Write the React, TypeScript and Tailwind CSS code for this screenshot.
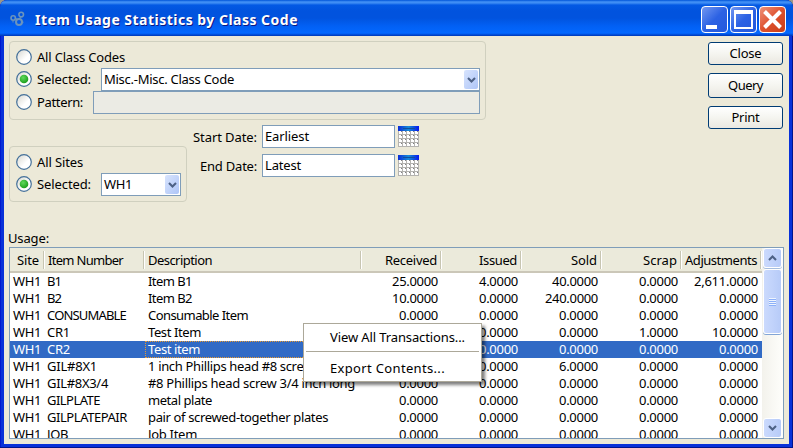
import { useLayoutEffect, useRef, useState } from "react";

/** Single-line text tracked out (or in) so that it spans exactly `w` pixels. */
function T({ w, children, className = "" }: { w: number; children: string; className?: string }) {
  const ref = useRef<HTMLSpanElement>(null);
  const [spacing, setSpacing] = useState(0);
  useLayoutEffect(() => {
    const el = ref.current;
    if (!el) return;
    el.style.letterSpacing = "0px";
    const s = (w - el.getBoundingClientRect().width) / children.length;
    el.style.letterSpacing = `${s}px`;
    setSpacing(s);
  }, [w, children]);
  return (
    <span ref={ref} className={`inline-block shrink-0 whitespace-pre ${className}`} style={{ letterSpacing: spacing }}>
      {children}
    </span>
  );
}

function Radio({ on = false, className = "" }: { on?: boolean; className?: string }) {
  return (
    <svg className={`h-4 w-4 shrink-0 ${className}`} viewBox="0 0 16 16">
      <defs>
        <linearGradient id="radioFace" x1="0" y1="0" x2="1" y2="1">
          <stop offset="0.1" stopColor="#dcdcd6" />
          <stop offset="0.6" stopColor="#ffffff" />
        </linearGradient>
        <radialGradient id="radioDot" cx="0.4" cy="0.35" r="0.7">
          <stop offset="0" stopColor="#5fd95c" />
          <stop offset="1" stopColor="#189a18" />
        </radialGradient>
      </defs>
      <circle cx="8" cy="8" r="7.3" fill="url(#radioFace)" stroke="#44709a" strokeWidth="1.2" />
      {on && <circle cx="8" cy="8" r="4.3" fill="url(#radioDot)" />}
    </svg>
  );
}

function Chevron({ up = false }: { up?: boolean }) {
  return (
    <svg className="h-[6px] w-[9px]" viewBox="0 0 9 6">
      <path d={up ? "M1 5 L4.5 1.5 L8 5" : "M1 1 L4.5 4.5 L8 1"} fill="none" stroke="#4d6185" strokeWidth="2.1" />
    </svg>
  );
}

function Combo({ text, w, className }: { text: string; w: number; className: string }) {
  return (
    <div className={`flex h-[23px] items-center justify-between border border-[#7f9db9] bg-white pr-px pl-[2px] ${className}`}>
      <T w={w}>{text}</T>
      <div className="flex h-[19px] w-[14px] items-center justify-center rounded-[2px] bg-linear-to-br from-[#d8e4fd] to-[#aec5f7]">
        <Chevron />
      </div>
    </div>
  );
}

function Calendar() {
  return (
    <svg className="ml-[3px] h-[21px] w-[21px] shrink-0" viewBox="0 0 21 21" shapeRendering="crispEdges">
      <defs>
        <linearGradient id="calHead">
          <stop offset="0" stopColor="#0a2cd8" />
          <stop offset="0.5" stopColor="#148ad8" />
          <stop offset="1" stopColor="#0717ee" />
        </linearGradient>
      </defs>
      <rect width="21" height="21" fill="#b4b3b0" />
      <rect width="21" height="5" fill="url(#calHead)" />
      <rect x="5" y="2" width="12" height="1" fill="#104e9c" />
      {[5, 9, 13, 17].map((y) =>
        [0, 4, 8, 12, 16].map((x) => (
          <g key={`${x}-${y}`}>
            <rect x={x + 1} y={y} width="3" height="3" fill="#fff" />
            <rect x={x + 3} y={y} width="1" height="1" fill="#808085" />
          </g>
        )),
      )}
    </svg>
  );
}

function DateRow({ label, lw, value, vw }: { label: string; lw: number; value: string; vw: number }) {
  return (
    <div className="flex h-[23px] items-center justify-end">
      <T w={lw} className="mt-px mr-[5px]">{label}</T>
      <div className="flex h-[23px] w-[133px] items-center border border-[#7f9db9] bg-white pl-[2px]">
        <T w={vw} className="-mt-px">{value}</T>
      </div>
      <Calendar />
    </div>
  );
}

function Button({ text, w, className }: { text: string; w: number; className: string }) {
  return (
    <button
      className={`flex w-[75px] items-center justify-center rounded-[3px] border border-[#003c74] bg-linear-to-b from-white via-[#f5f5f0] to-[#eae8e1] ${className}`}
    >
      <T w={w} className="-mt-px">{text}</T>
    </button>
  );
}

function TitleButton({ kind }: { kind: "min" | "max" | "close" }) {
  const face =
    kind === "close" ? "from-[#ed9077] via-[#de512d] to-[#c93d17]" : "from-[#7296f0] via-[#2c62e4] to-[#2458dc]";
  return (
    <div className={`h-[27px] w-[27px] rounded-[4px] border border-white bg-linear-to-br ${face}`}>
      <svg className="h-[25px] w-[25px]" viewBox="0 0 25 25">
        {kind === "min" && <rect x="4" y="18" width="11" height="4" fill="#fff" />}
        {kind === "max" && (
          <path d="M3 3H22V22H3Z M5 7V20H20V7Z" fill="#fff" fillRule="evenodd" />
        )}
        {kind === "close" && <path d="M4.5 4.5L20.5 20.5M20.5 4.5L4.5 20.5" stroke="#fff" strokeWidth="4" />}
      </svg>
    </div>
  );
}

const grid = "grid grid-cols-[34px_100px_217px_80px_80px_80px_80px_80px]";

const headers: [string, number][] = [
  ["Site", 22],
  ["Item Number", 75],
  ["Description", 64],
  ["Received", 52],
  ["Issued", 38],
  ["Sold", 26],
  ["Scrap", 34],
  ["Adjustments", 72],
];

type Row = { item: [string, number]; desc: [string, number]; nums: string[]; selected?: boolean };
const Z = "0.0000";
const rows: Row[] = [
  { item: ["B1", 14], desc: ["Item B1", 44], nums: ["25.0000", "4.0000", "40.0000", Z, "2,611.0000"] },
  { item: ["B2", 14], desc: ["Item B2", 44], nums: ["10.0000", Z, "240.0000", Z, Z] },
  { item: ["CONSUMABLE", 79], desc: ["Consumable Item", 100], nums: [Z, Z, Z, Z, Z] },
  { item: ["CR1", 23], desc: ["Test Item", 53], nums: [Z, Z, Z, "1.0000", "10.0000"] },
  { item: ["CR2", 23], desc: ["Test item", 52], nums: [Z, Z, Z, Z, Z], selected: true },
  { item: ["GIL#8X1", 50], desc: ["1 inch Phillips head #8 screw", 165], nums: [Z, Z, "6.0000", Z, Z] },
  { item: ["GIL#8X3/4", 61], desc: ["#8 Phillips head screw 3/4 inch long", 207], nums: [Z, Z, Z, Z, Z] },
  { item: ["GILPLATE", 53], desc: ["metal plate", 64], nums: [Z, Z, Z, Z, Z] },
  { item: ["GILPLATEPAIR", 80], desc: ["pair of screwed-together plates", 180], nums: [Z, Z, Z, Z, Z] },
  { item: ["JOB", 21], desc: ["Job Item", 49], nums: [Z, Z, Z, Z, Z] },
];

function numWidth(s: string) {
  return s.length * 7 - (s.includes(",") ? 6 : 3);
}

function ScrollBar() {
  const face = "border border-white bg-linear-to-r from-[#cbdafd] to-[#b7cbf8] rounded-[3px] flex items-center justify-center";
  return (
    <div className="flex w-[21px] flex-col bg-linear-to-r from-[#f3f2ec] to-[#fefefb] px-px">
      <div className={`h-[20px] shrink-0 shadow-[0_1px_0_#a5bdde] ${face}`}><Chevron up /></div>
      <div className={`mt-px h-[65px] shrink-0 shadow-[0_1px_0_#83a5d5] ${face}`}>
        <div className="h-[8px] w-[7px] bg-[repeating-linear-gradient(180deg,#eef4fe_0px,#eef4fe_1px,#8cb0f8_1px,#8cb0f8_2px)]" />
      </div>
      <div className={`mt-auto h-[20px] shrink-0 ${face}`}><Chevron /></div>
    </div>
  );
}

function UsageTable() {
  return (
    <div className="flex h-[192px] w-[775px] overflow-hidden border border-[#7f9db9] bg-white">
      <div className="w-[752px] shrink-0">
        <div className={`h-[25px] border-b-[2px] border-[#cbc7b8] bg-[#ebeadb] pl-px ${grid}`}>
          {headers.map(([h, w], i) => (
            <div key={h} className={`flex items-center pt-px ${i === 1 || i === 2 ? "" : "justify-end"}`}>
              {(i === 1 || i === 2) && <span className="w-[3px] shrink-0" />}
              <T w={w}>{h}</T>
              <span className={`h-[18px] w-[2px] shrink-0 border-r border-l border-r-white border-l-[#c7c5b2] ${i === 1 || i === 2 ? "ml-auto" : i === 0 ? "ml-[4px]" : "ml-[3px]"}`} />
            </div>
          ))}
        </div>
        {rows.map((r) => (
          <div key={r.item[0]} className={`h-[17px] leading-[17px] ${grid} ${r.selected ? "bg-[#316ac5] text-white" : ""}`}>
            <div className="pl-[3px]"><T w={28}>WH1</T></div>
            <div className="pl-[3px]"><T w={r.item[1]}>{r.item[0]}</T></div>
            <div className={`overflow-hidden ${r.selected ? "ml-px border border-dotted border-[#e8992f] pl-[2px] leading-[15px]" : "pl-[4px]"}`}>
              <T w={r.desc[1]}>{r.desc[0]}</T>
            </div>
            {r.nums.map((n, i) => (
              <div key={i} className="pr-[3px] text-right"><T w={numWidth(n)}>{n}</T></div>
            ))}
          </div>
        ))}
      </div>
      <ScrollBar />
    </div>
  );
}

export default function App() {
  return (
    <div className="relative flex h-[448px] w-[793px] flex-col overflow-hidden bg-[#9a9789] font-['Noto_Sans','DejaVu_Sans',sans-serif] text-[13px] leading-[17px] text-black">
      <div className="flex h-full flex-col rounded-t-[7px] bg-[#0831d9] shadow-[inset_0_-1px_0_#00138c,inset_1px_0_0_#0019cf,inset_-1px_0_0_#00138c]">
        <div className="flex h-[36px] shrink-0 items-center rounded-t-[7px] bg-[linear-gradient(180deg,#0054d8_0%,#3f8ef5_5%,#3f8ef5_8%,#0359e4_14%,#0153de_30%,#0153de_50%,#0260f4_72%,#0368ff_92%,#0047d0_97%,#0038b4_100%)] pr-[7px] pl-[10px]">
          <svg className="mt-[2px] h-[16px] w-[16px]" viewBox="0 0 16 16" fill="none" stroke="#6b94bd">
            <circle cx="3.2" cy="7" r="2.2" strokeWidth="1.6" />
            <circle cx="11.2" cy="3.6" r="2.3" strokeWidth="1.6" />
            <circle cx="9" cy="11" r="3" strokeWidth="2" />
            <path d="M6.3 7.3L7.4 8.6M10.4 6L9.8 7.8M3 10V11.5M12 11.2H13.5" strokeWidth="1" />
          </svg>
          <T w={263} className="mt-[3px] ml-[9px] text-[14px] font-bold text-white [text-shadow:1px_1px_0_#0a1883]">
            Item Usage Statistics by Class Code
          </T>
          <div className="mt-[3px] ml-auto flex gap-[2px]">
            <TitleButton kind="min" />
            <TitleButton kind="max" />
            <TitleButton kind="close" />
          </div>
        </div>

        <div className="mx-[4px] h-[408px] bg-[#ece9d8] pt-[5px] pl-[5px]">
          <div className="flex h-[191px] justify-between pr-[6px]">
            <div>
              <div className="h-[79px] w-[477px] rounded-[4px] border border-[#d0d0bf] pt-[6px] pl-[6px]">
                <div className="flex h-[18px] items-center"><Radio /><T w={88} className="ml-[5px]">All Class Codes</T></div>
                <div className="mt-[2px] flex h-[23px] items-center">
                  <Radio on className="-mt-[2px]" /><T w={54} className="ml-[5px]">Selected:</T>
                  <Combo text="Misc.-Misc. Class Code" w={130} className="ml-[10px] w-[379px]" />
                </div>
                <div className="flex h-[23px] items-center">
                  <Radio className="-mt-px" /><T w={46} className="ml-[5px]">Pattern:</T>
                  <div className="ml-[10px] h-[23px] w-[387px] border border-[#7f9db9] bg-[#ebebe4]" />
                </div>
              </div>
              <div className="flex">
                <div className="mt-[26px] h-[56px] w-[178px] rounded-[4px] border border-[#d0d0bf] pt-[6px] pl-[6px]">
                  <div className="flex h-[18px] items-center"><Radio /><T w={46} className="ml-[5px]">All Sites</T></div>
                  <div className="mt-[2px] flex h-[23px] items-center">
                    <Radio on className="-mt-[2px]" /><T w={54} className="ml-[5px]">Selected:</T>
                    <Combo text="WH1" w={28} className="ml-[10px] w-[80px]" />
                  </div>
                </div>
                <div className="mt-[5px] ml-[4px] flex w-[228px] flex-col gap-[6px]">
                  <DateRow label="Start Date:" lw={64} value="Earliest" vw={44} />
                  <DateRow label="End Date:" lw={57} value="Latest" vw={36} />
                </div>
              </div>
            </div>
            <div className="flex flex-col gap-[8px] pt-px">
              <Button text="Close" w={32} className="h-[23px]" />
              <Button text="Query" w={35} className="h-[25px]" />
              <Button text="Print" w={28} className="h-[23px]" />
            </div>
          </div>
          <div className="-ml-px h-[15px] leading-[13px]"><T w={41}>Usage:</T></div>
          <UsageTable />
        </div>
      </div>

      <div className="absolute top-[323px] left-[303px] h-[59px] w-[179px] border border-[#aca899] bg-white px-[2px] shadow-[3px_3px_3px_rgba(0,0,0,0.5)]">
        <div className="flex h-[27px] items-center pl-[24px]"><T w={135}>View All Transactions...</T></div>
        <div className="h-px bg-[#aca899]" />
        <div className="flex h-[29px] items-center pt-[3px] pl-[24px]"><T w={115}>Export Contents...</T></div>
      </div>
    </div>
  );
}
